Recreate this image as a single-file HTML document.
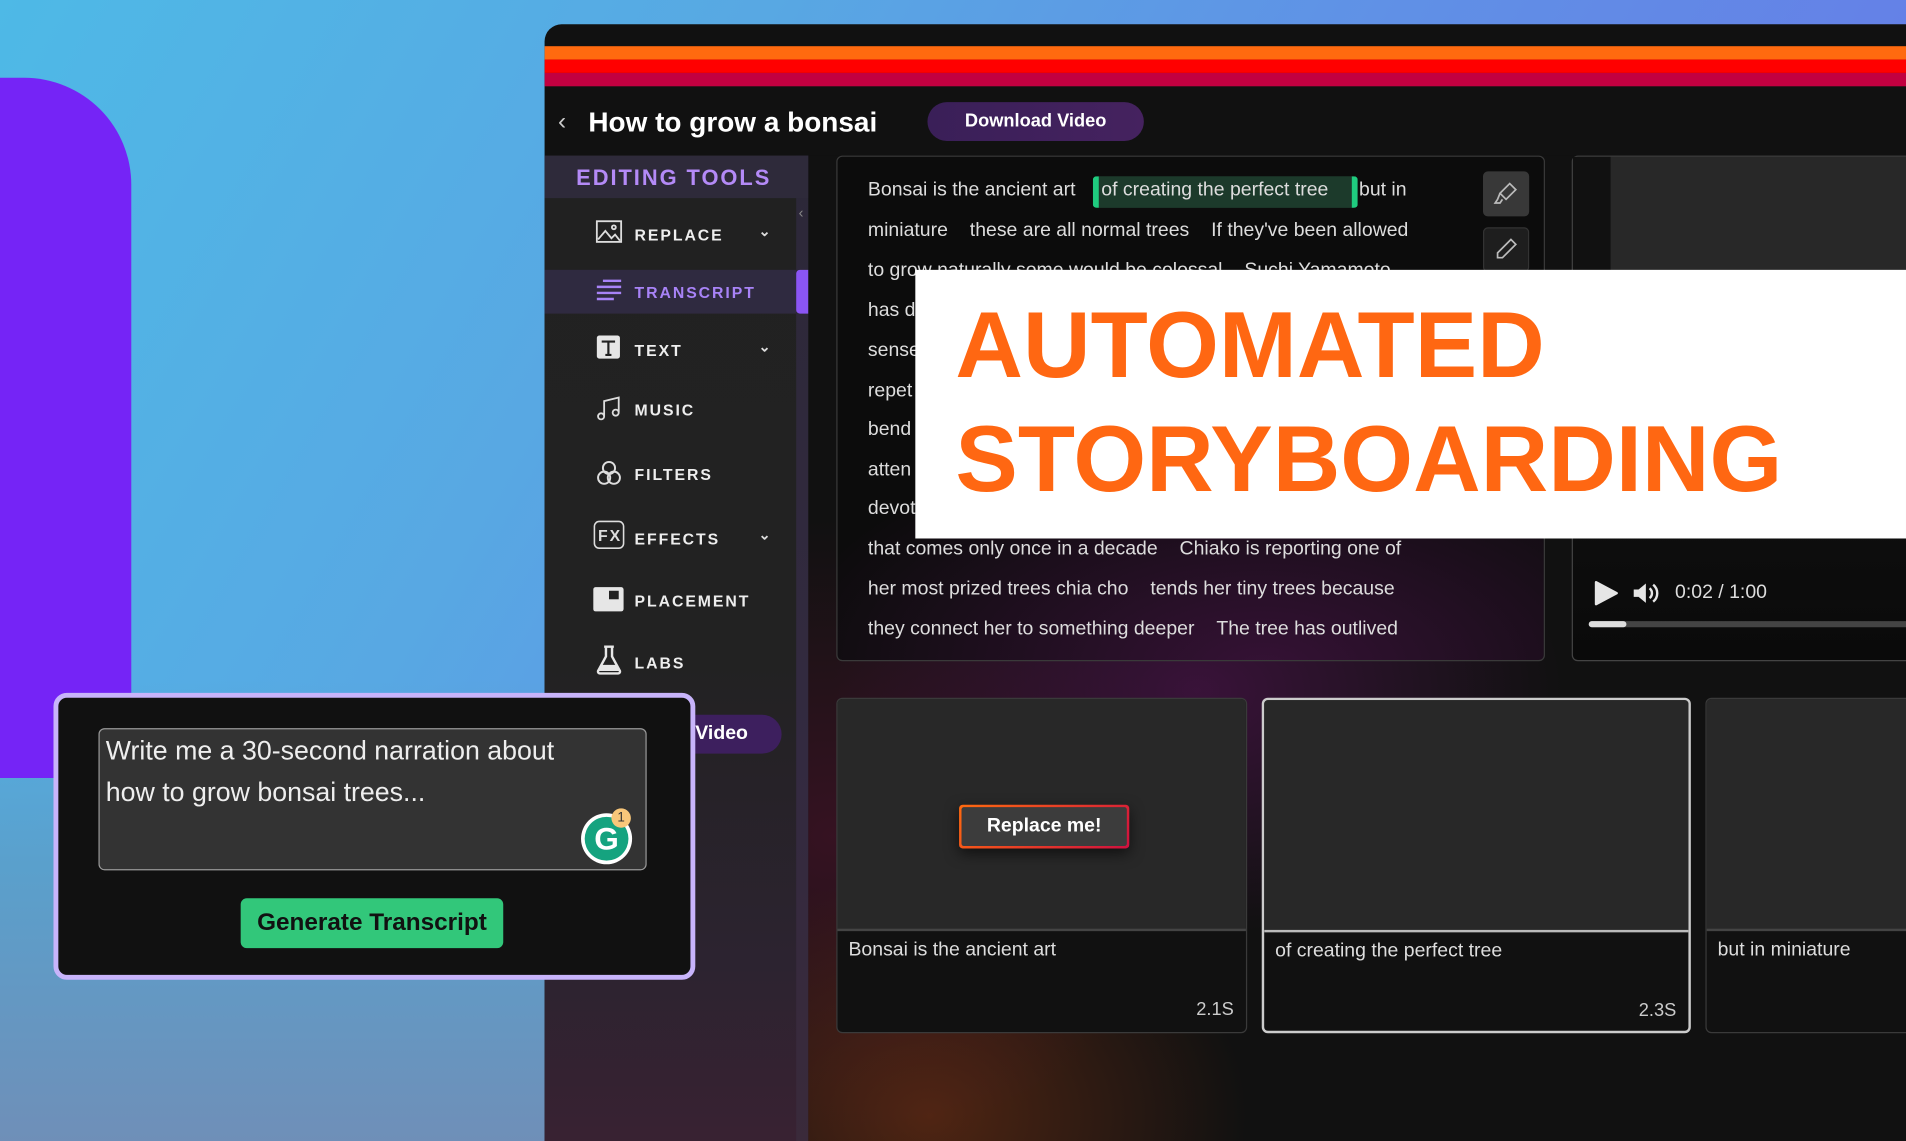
<!DOCTYPE html>
<html><head><meta charset="utf-8"><style>
*{box-sizing:border-box;margin:0;padding:0}
html,body{width:1906px;height:1141px;overflow:hidden}
body{font-family:"Liberation Sans",sans-serif;background:linear-gradient(120deg,#4fb8e6 0%,#5aa2e4 35%,#6a88e8 60%,#7a6fe8 100%)}
#w{position:absolute;left:0;top:0;width:1568px;height:939px;transform:scale(1.21556);transform-origin:0 0;overflow:hidden;
background:linear-gradient(120deg,#4eb9e6 0%,#58a8e3 30%,#6090e6 55%,#6a6ee8 100%)}
.bgb{position:absolute;left:0;top:560px;width:450px;height:380px;background:linear-gradient(180deg,rgba(80,170,220,0) 0%,#5aa0cc 40%,#6f8fb8 100%)}
.purp{position:absolute;left:0;top:64px;width:108px;height:576px;background:#7524f6;border-radius:0 88px 60px 0}
.app{position:absolute;left:448px;top:20px;width:1140px;height:930px;background:#111;border-radius:14px 0 0 0;overflow:hidden}
.stripe{position:absolute;left:0;width:100%}
.side{position:absolute;left:0;top:108px;width:217px;height:830px;background:linear-gradient(180deg,#212121 0%,#222 50%,#2c2330 80%,#3a2232 100%)}
.sidecol{position:absolute;left:207px;top:0;width:10px;height:100%;background:linear-gradient(180deg,#2c2838,#332a40 60%,#3a2a3a)}
.edt{position:absolute;left:0;top:0;width:217px;height:35px;background:#2e2a3a;color:#b48af7;font-weight:bold;font-size:18px;letter-spacing:1.6px;padding:8px 0 0 26px}
.it{position:absolute;left:0;width:207px;height:36px;color:#eee;font-weight:bold;font-size:13px;letter-spacing:1.6px}
.it svg{position:absolute;left:42px;top:6px}
.it span{position:absolute;left:74px;top:11px}
.it i{position:absolute;left:176px;top:8px;font-style:normal;font-size:12px;color:#ddd}
.main{position:absolute;left:217px;top:108px;width:930px;height:830px;background:
radial-gradient(ellipse 300px 200px at 320px 440px,rgba(90,20,90,.55),transparent),
radial-gradient(ellipse 260px 200px at 100px 790px,rgba(120,50,20,.6),transparent),
radial-gradient(ellipse 300px 260px at 20px 560px,rgba(90,20,50,.5),transparent),#111}
.panel{position:absolute;border:1.5px solid #3a3a3a;border-radius:5px}
.tr{left:23px;top:0;width:583px;height:416px;background:radial-gradient(ellipse 400px 200px at 350px 420px,rgba(70,20,70,.7),transparent),#0c0c0c}
.ln{position:absolute;left:25px;font-size:16px;color:#ddd;white-space:nowrap;word-spacing:0}
.ln b{font-weight:normal;margin-left:18px}
.ib{position:absolute;left:531px;width:38px;height:37px;background:#383838;border-radius:4px}
.card{position:absolute;top:446px;height:276px;border:1.5px solid #3a3a3a;border-radius:5px;overflow:hidden;background:#111}
.card .tp{position:absolute;left:0;top:0;width:100%;height:191px;background:#282828;border-bottom:2px solid #444}
.card .cp{position:absolute;left:9px;top:198px;font-size:16px;color:#ddd}
.card .du{position:absolute;right:10px;top:247px;font-size:15px;color:#ccc}
.ov{position:absolute;left:753px;top:222px;width:820px;height:221px;background:#fff}
.ov div{position:absolute;left:33px;color:#ff6712;font-weight:bold;font-size:77px;letter-spacing:0;line-height:1}
.pc{position:absolute;left:44px;top:570px;width:528px;height:236px;border:4px solid #c8b4fb;border-radius:11px;background:#111}
</style></head><body><div id="w">
<div class="bgb"></div>
<div class="purp"></div>
<div class="app">
 <div class="stripe" style="top:18px;height:11px;background:#ff6a0f"></div>
 <div class="stripe" style="top:29px;height:11px;background:#ff0000"></div>
 <div class="stripe" style="top:40px;height:11px;background:#c20040"></div>
 <div style="position:absolute;left:11px;top:69px;color:#ccc;font-size:20px">&#8249;</div>
 <div style="position:absolute;left:36px;top:67px;color:#fff;font-weight:bold;font-size:23px">How to grow a bonsai</div>
 <div style="position:absolute;left:315px;top:64px;width:178px;height:32px;border-radius:16px;background:linear-gradient(90deg,#3a1f58,#45225f);color:#fff;font-weight:bold;font-size:15px;text-align:center;line-height:32px">Download Video</div>
 <div class="side">
  <div class="sidecol"></div>
  <div class="edt">EDITING TOOLS</div>
  <div style="position:absolute;left:209px;top:40px;color:#888;font-size:12px">&#8249;</div>
  <div class="it" style="top:47px"><svg width="22" height="20" viewBox="0 0 22 20" fill="none" stroke="#ddd" stroke-width="1.5"><rect x="1" y="1" width="20" height="17"/><path d="M2 16l6-7 5 6 3-3 4 5"/><circle cx="15" cy="6" r="1.6"/></svg><span>REPLACE</span><i>&#8964;</i></div>
  <div class="it" style="top:94px;height:36px;width:207px;background:#2f2a40"></div>
  <div style="position:absolute;left:207px;top:94px;width:10px;height:36px;background:#8b55f5;border-radius:3px 0 0 3px"></div>
  <div class="it" style="top:94px;color:#a883f7"><svg width="22" height="20" viewBox="0 0 22 20" stroke="#a883f7" stroke-width="2"><path d="M6 3h15M1 8h20M1 13h20M1 18h14"/></svg><span>TRANSCRIPT</span></div>
  <div class="it" style="top:142px"><svg width="22" height="20" viewBox="0 0 22 20"><rect x="1" y="0" width="19" height="19" rx="2" fill="#e6e6e6"/><path d="M5 5h11M10.5 5v11M8 16h5" stroke="#222" stroke-width="1.8"/></svg><span>TEXT</span><i>&#8964;</i></div>
  <div class="it" style="top:191px"><svg width="22" height="22" viewBox="0 0 22 22" fill="none" stroke="#ddd" stroke-width="1.5"><path d="M7 17V5l12-3v12"/><circle cx="4.5" cy="17.5" r="2.5"/><circle cx="16.5" cy="14.5" r="2.5"/></svg><span>MUSIC</span></div>
  <div class="it" style="top:244px"><svg width="22" height="22" viewBox="0 0 22 22" fill="none" stroke="#ddd" stroke-width="1.6"><circle cx="11" cy="7" r="5"/><circle cx="7" cy="15" r="5"/><circle cx="15" cy="15" r="5"/></svg><span>FILTERS</span></div>
  <div class="it" style="top:297px"><svg width="26" height="24" viewBox="0 0 26 24" style="left:40px;top:3px"><rect x="1" y="1" width="24" height="22" rx="4" fill="none" stroke="#ddd" stroke-width="1.3"/><text x="4" y="17" font-family="Liberation Sans" font-size="13" fill="#ddd">FX</text></svg><span>EFFECTS</span><i>&#8964;</i></div>
  <div class="it" style="top:348px"><svg width="26" height="22" viewBox="0 0 26 22" style="left:40px"><rect x="0" y="1" width="25" height="20" rx="2" fill="#e6e6e6"/><rect x="13" y="4" width="8" height="7" fill="#222"/></svg><span>PLACEMENT</span></div>
  <div class="it" style="top:399px"><svg width="22" height="26" viewBox="0 0 22 26" style="top:3px"><path d="M7 2h8M8.5 2v8L2 22a1.5 1.5 0 0 0 1.5 2h15a1.5 1.5 0 0 0 1.5-2L13.5 10V2" fill="none" stroke="#e6e6e6" stroke-width="2"/><path d="M5 17h12l2.5 5h-17z" fill="#e6e6e6"/></svg><span>LABS</span></div>
  <div style="position:absolute;left:100px;top:460px;width:95px;height:32px;border-radius:0 16px 16px 0;background:#3d1f5e;color:#fff;font-weight:bold;font-size:16px;line-height:32px;padding-left:24px">Video</div>
 </div>
 <div class="main">
  <div class="panel tr">
   <div style="position:absolute;left:210px;top:16px;width:218px;height:26px;background:#1c3a2b;border-left:5px solid #1fcc7f;border-right:5px solid #1fcc7f;border-radius:3px"></div>
   <div class="ln" style="top:19px">Bonsai is the ancient art</div>
   <div class="ln" style="top:19px;left:217px">of creating the perfect tree</div>
   <div class="ln" style="top:19px;left:429px">but in</div>
   <div class="ln" style="top:52px">miniature<b>these are all normal trees</b><b>If they've been allowed</b></div>
   <div class="ln" style="top:85px">to grow naturally some would be colossal<b>Suchi Yamamoto</b></div>
   <div class="ln" style="top:118px">has devoted</div>
   <div class="ln" style="top:151px">sense</div>
   <div class="ln" style="top:184px">repet</div>
   <div class="ln" style="top:216px">bend</div>
   <div class="ln" style="top:249px">atten</div>
   <div class="ln" style="top:281px">devot</div>
   <div class="ln" style="top:314px">that comes only once in a decade<b>Chiako is reporting one of</b></div>
   <div class="ln" style="top:347px">her most prized trees chia cho<b>tends her tiny trees because</b></div>
   <div class="ln" style="top:380px">they connect her to something deeper<b>The tree has outlived</b></div>
   <div class="ib" style="top:12px"><svg width="38" height="37" viewBox="0 0 38 37" fill="none" stroke="#bbb" stroke-width="1.4"><path d="M22 10l5 5-8 8-5-5z M14 18l-2 5 -2 3h4l2-3"/></svg></div>
   <div class="ib" style="top:58px;background:#1e1e1e;border:1px solid #333"><svg width="36" height="35" viewBox="0 0 36 35" fill="none" stroke="#bbb" stroke-width="1.4"><path d="M22 9l4 4-11 11h-4v-4z"/></svg></div>
  </div>
  <div class="panel" style="left:628px;top:0;width:300px;height:416px;background:linear-gradient(180deg,#181818,#0a0a0a);border-color:#444">
   <div style="position:absolute;left:0;top:0;width:31px;height:94px;background:#111"></div>
   <div style="position:absolute;left:31px;top:0;width:270px;height:94px;background:#282828"></div>
   <svg style="position:absolute;left:16px;top:348px" width="24" height="22" viewBox="0 0 24 22"><path d="M3 2l17 9-17 9z" fill="#e6e6e6" stroke="#e6e6e6" stroke-linejoin="round" stroke-width="2"/></svg>
   <svg style="position:absolute;left:48px;top:348px" width="26" height="22" viewBox="0 0 26 22"><path d="M2 8h4l6-5v16l-6-5H2z" fill="#e6e6e6"/><path d="M15 7a5 5 0 0 1 0 8M18 4a9 9 0 0 1 0 14" stroke="#e6e6e6" stroke-width="2" fill="none"/></svg>
   <div style="position:absolute;left:84px;top:350px;color:#ddd;font-size:16px">0:02 / 1:00</div>
   <div style="position:absolute;left:13px;top:382px;width:290px;height:5px;background:#444;border-radius:3px"></div>
   <div style="position:absolute;left:13px;top:382px;width:31px;height:5px;background:#ddd;border-radius:3px"></div>
  </div>
  <div class="card" style="left:23px;width:338px"><div class="tp"></div>
   <div style="position:absolute;left:100px;top:87px;width:140px;height:36px;border-radius:3px;padding:2px;background:linear-gradient(135deg,#ff6a0f,#d0103f);box-shadow:0 4px 12px rgba(0,0,0,.6)"><div style="width:100%;height:100%;background:#3c3c3c;border-radius:2px;color:#fff;font-weight:bold;font-size:16px;text-align:center;line-height:32px">Replace me!</div></div>
   <div class="cp">Bonsai is the ancient art</div><div class="du">2.1S</div></div>
  <div class="card" style="left:373px;width:353px;border:2px solid #ccc"><div class="tp" style="border-bottom:2px solid #bbb"></div><div class="cp">of creating the perfect tree</div><div class="du">2.3S</div></div>
  <div class="card" style="left:738px;width:200px"><div class="tp"></div><div class="cp">but in miniature</div></div>
 </div>
</div>
<div class="ov"><div style="top:24px">AUTOMATED</div><div style="top:118px">STORYBOARDING</div></div>
<div class="pc">
 <div style="position:absolute;left:33px;top:25px;width:451px;height:117px;background:#333;border:1.5px solid #999;border-radius:5px;color:#eee;font-size:22px;line-height:34px;padding:1px 5px">Write me a 30-second narration about<br>how to grow bonsai trees...</div>
 <div style="position:absolute;left:430px;top:95px;width:42px;height:42px;border-radius:50%;background:#fff"></div>
 <div style="position:absolute;left:433px;top:98px;width:36px;height:36px;border-radius:50%;background:#15a37f;color:#fff;font-weight:bold;font-size:26px;text-align:center;line-height:36px">G</div>
 <div style="position:absolute;left:455px;top:91px;width:16px;height:16px;border-radius:50%;background:#f8c77a;color:#333;font-size:11px;text-align:center;line-height:16px">1</div>
 <div style="position:absolute;left:150px;top:165px;width:216px;height:41px;background:#32c77a;border-radius:5px;color:#111;font-weight:bold;font-size:20px;text-align:center;line-height:41px">Generate Transcript</div>
</div>
</div></body></html>
